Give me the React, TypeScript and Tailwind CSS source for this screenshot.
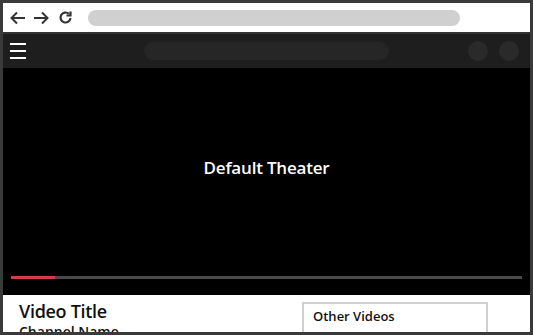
export default function App() {
  const font = { fontFamily: '"Open Sans", "Noto Sans", sans-serif' };
  return (
    <div
      className="w-[533px] h-[335px] border-[3px] border-[#3a3a3a] bg-white flex flex-col overflow-hidden"
      style={font}
    >
      {/* browser chrome */}
      <div className="h-[31px] shrink-0 flex items-center border-b-2 border-[#333] bg-white pl-[7px]">
        <svg width="16" height="14" viewBox="0 0 16 14" fill="none" stroke="#333" strokeWidth="2">
          <path d="M15 7H2M7 1.5 1.5 7 7 12.5" />
        </svg>
        <svg width="16" height="14" viewBox="0 0 16 14" fill="none" stroke="#333" strokeWidth="2" className="ml-[7px]">
          <path d="M1 7h13M9 1.5 14.5 7 9 12.5" />
        </svg>
        <svg width="15" height="15" viewBox="0 0 15 15" fill="none" stroke="#333" strokeWidth="2.2" className="ml-[9px]">
          <path d="M12.5 8a5 5 0 1 1-1.6-4.2" />
          <path d="M12.5 1.5v4h-4" />
        </svg>
        <div className="ml-[15px] w-[372px] h-[16px] rounded-full bg-[#d0d0d0]" />
      </div>

      {/* app header */}
      <div className="h-[34px] shrink-0 bg-[#1e1e1e] flex items-center pl-[7px] pr-[11px]">
        <div className="w-[16px] flex flex-col gap-[5px]">
          <div className="h-[2px] bg-white" />
          <div className="h-[2px] bg-white" />
          <div className="h-[2px] bg-white" />
        </div>
        <div className="ml-[118px] w-[245px] h-[18px] rounded-full bg-[#262626]" />
        <div className="ml-auto flex gap-[11px]">
          <div className="w-[20px] h-[20px] rounded-full bg-[#2a2a2a]" />
          <div className="w-[20px] h-[20px] rounded-full bg-[#2a2a2a]" />
        </div>
      </div>

      {/* theater */}
      <div className="h-[227px] shrink-0 bg-black flex flex-col">
        <div className="h-[200px] flex items-center justify-center">
          <span className="text-white text-[17px] font-semibold tracking-[-0.2px]">Default Theater</span>
        </div>
        <div className="px-[8px] pt-[8px]">
          <div className="h-[3px] bg-[#4a4a4a] flex">
            <div className="w-[44px] bg-[#d33d48]" />
          </div>
        </div>
      </div>

      {/* below video */}
      <div className="flex-1 flex pl-[16px] pr-[42px]">
        <div className="flex-1 pt-[5px]">
          <div className="text-[18px] font-semibold leading-[22px] tracking-[-0.3px] text-[#111]">Video Title</div>
          <div className="text-[14px] font-semibold leading-[20px] text-[#111]">Channel Name</div>
        </div>
        <div className="mt-[7px] w-[186px] border-2 border-[#d0d0d0] border-b-0 px-[9px] pt-[3px]">
          <div className="text-[13px] font-semibold text-[#111]">Other Videos</div>
        </div>
      </div>
    </div>
  );
}
